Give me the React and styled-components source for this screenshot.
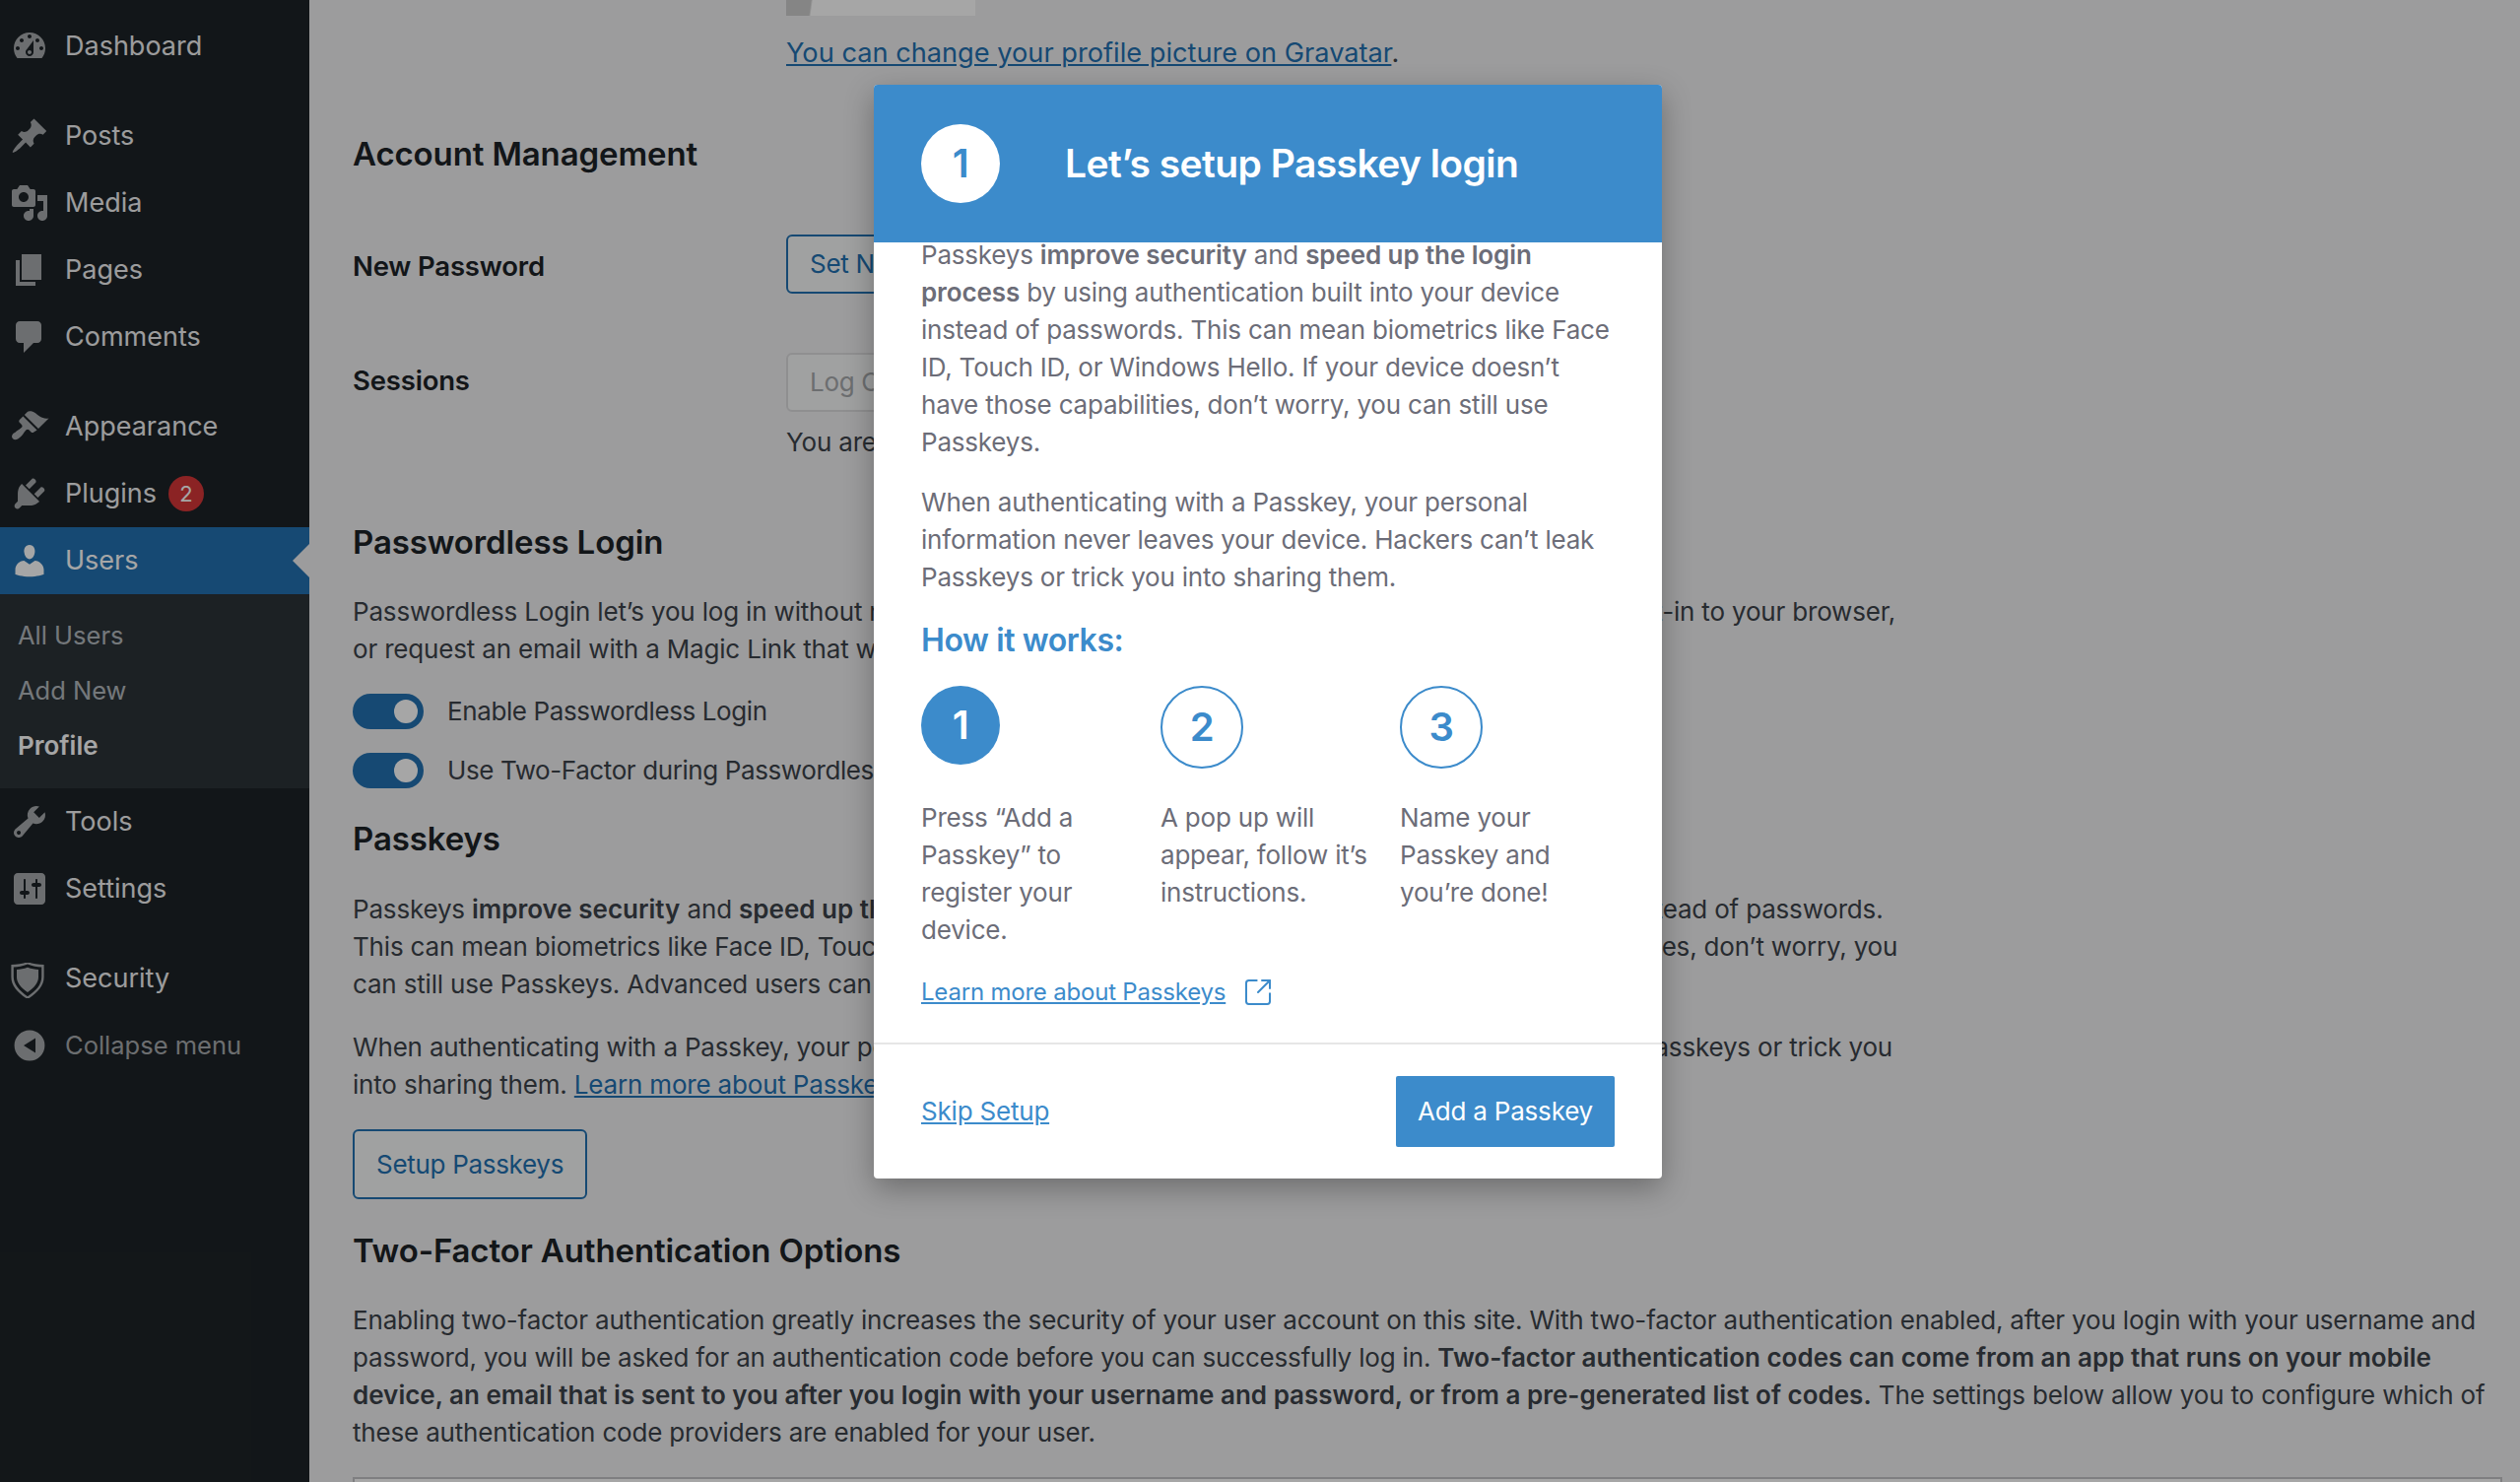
import React from "react";
import styled, { createGlobalStyle } from "styled-components";
import { SquareArrowOutUpRight } from "lucide-react";

const GlobalStyle = createGlobalStyle`
  html, body { margin: 0; padding: 0; background: #f0f0f1; }
  body { font-family: Inter, "Liberation Sans", sans-serif; font-size: 26px; line-height: 38px; color: #3c434a; letter-spacing: -0.18px; }
  * { box-sizing: border-box; }
`;

const Page = styled.div`
  position: relative;
  display: flex;
  width: 2558px;
  height: 1504px;
  overflow: hidden;
`;

const Sidebar = styled.nav`
  width: 314px;
  flex: none;
  background: #1d2327;
  padding-top: 13px;
  letter-spacing: 0;
`;

const MenuRow = styled.div`
  position: relative;
  display: flex;
  align-items: center;
  height: 68px;
  padding-left: 10px;
  margin-top: ${(p) => (p.$sep ? "23px" : "0")};
  background: ${(p) => (p.$active ? "#2271b1" : "transparent")};
  color: ${(p) => (p.$active ? "#fff" : p.$muted ? "#a7aaad" : "#f0f0f1")};
  font-size: ${(p) => (p.$muted ? "25.500px" : "27px")};
  svg { flex: none; width: 40px; height: 40px; margin-right: 16px; fill: ${(p) => (p.$active ? "#fff" : "#a7aaad")}; }
`;

const MenuArrow = styled.span`
  position: absolute;
  right: 0;
  top: 50%;
  margin-top: -17px;
  border: 17px solid transparent;
  border-left-width: 0;
  border-right: 17px solid #f0f0f1;
`;

const Badge = styled.span`
  display: inline-flex;
  align-items: center;
  justify-content: center;
  width: 36px;
  height: 36px;
  margin-left: 12px;
  border-radius: 50%;
  background: #d63638;
  color: #fff;
  font-size: 22px;
`;

const SubMenu = styled.div`
  background: #2c3338;
  padding: 14px 0 15px 18px;
`;

const SubItem = styled.div`
  height: 56px;
  line-height: 56px;
  font-size: ${(p) => (p.$current ? "26px" : "25.500px")};
  color: ${(p) => (p.$current ? "#fff" : "rgba(240, 246, 252, 0.7)")};
  font-weight: ${(p) => (p.$current ? 600 : 400)};
`;

const Main = styled.main`
  flex: 1;
  min-width: 0;
  padding-left: 44px;
`;

const FormRow = styled.div`
  display: flex;
  align-items: ${(p) => p.$align || "flex-start"};
  margin-top: ${(p) => p.$top || "0"};
`;

const RowLabel = styled.div`
  width: 440px;
  flex: none;
  padding-top: ${(p) => p.$pad || "0"};
  font-size: 27.500px;
  font-weight: 600;
  color: #1d2327;
`;

const RowBody = styled.div`
  white-space: nowrap;
`;

const AvatarEdge = styled.div`
  width: 192px;
  height: 16px;
  background: linear-gradient(98deg, #cdcdcd 13%, #fff 14%);
  margin-bottom: 19px;
`;

const TextLink = styled.a`
  color: #2271b1;
  text-decoration: underline;
`;

const GravatarLine = styled.div`
  font-size: 27.200px;
  letter-spacing: 0;
`;

const SectionTitle = styled.h2`
  margin: ${(p) => p.$margin || "0"};
  font-size: 33px;
  line-height: 44px;
  font-weight: 600;
  letter-spacing: -0.12px;
  color: #1d2327;
`;

const OutlineButton = styled.div`
  display: ${(p) => (p.$block ? "flex" : "inline-flex")};
  width: ${(p) => (p.$block ? "fit-content" : "auto")};
  align-items: center;
  height: ${(p) => p.$height || "60px"};
  margin-top: ${(p) => p.$top || "0"};
  padding: 0 22px;
  border: 2px solid ${(p) => (p.$disabled ? "#dcdcde" : "#2271b1")};
  border-radius: 6px;
  color: ${(p) => (p.$disabled ? "#a7aaad" : "#2271b1")};
  background: #f6f7f7;
  letter-spacing: -0.3px;
  white-space: nowrap;
`;

const SessionNote = styled.div`
  margin-top: 12px;
`;

const Para = styled.p`
  margin: ${(p) => p.$margin || "0"};
  white-space: nowrap;
  strong { font-weight: 600; letter-spacing: 0; }
`;

/* the stretch of a line that sits behind the modal: tightened so the visible tail lands right */
const Tight = styled.span`
  letter-spacing: ${(p) => p.$by};
`;

const ToggleRow = styled.div`
  display: flex;
  align-items: center;
  height: 36px;
  margin-top: ${(p) => p.$top};
  white-space: nowrap;
  letter-spacing: -0.4px;
`;

const Toggle = styled.span`
  flex: none;
  display: flex;
  justify-content: flex-end;
  align-items: center;
  width: 72px;
  height: 36px;
  margin-right: 24px;
  padding-right: 6px;
  border-radius: 18px;
  background: #2271b1;
  &::after {
    content: "";
    width: 24px;
    height: 24px;
    border-radius: 50%;
    background: #fff;
  }
`;

const ProvidersBox = styled.div`
  width: 2182px;
  height: 20px;
  margin-top: 26px;
  background: #fff;
  border: 2px solid #c3c4c7;
`;

const Overlay = styled.div`
  position: absolute;
  inset: 0;
  background: rgba(0, 0, 0, 0.35);
`;

const Modal = styled.div`
  position: absolute;
  left: 887px;
  top: 86px;
  width: 800px;
  height: 1110px;
  display: flex;
  flex-direction: column;
  background: #fff;
  border-radius: 4px;
  overflow: hidden;
  box-shadow: 0 10px 30px rgba(0, 0, 0, 0.3);
  color: #6c6d78;
  letter-spacing: -0.2px;
`;

const ModalHeader = styled.header`
  position: relative;
  z-index: 1;
  flex: none;
  display: flex;
  align-items: center;
  height: 160px;
  padding-left: 48px;
  background: #3c8bcb;
  color: #fff;
`;

const HeaderTitle = styled.h1`
  margin: 0 0 0 66px;
  font-size: 39px;
  line-height: 48px;
  font-weight: 600;
  letter-spacing: -0.56px;
`;

const StepCircle = styled.div`
  flex: none;
  display: flex;
  align-items: center;
  justify-content: center;
  width: ${(p) => (p.$variant === "outline" ? "84px" : "80px")};
  height: ${(p) => (p.$variant === "outline" ? "84px" : "80px")};
  border-radius: 50%;
  font-size: 40px;
  font-weight: 600;
  background: ${(p) => (p.$variant === "filled" ? "#3c8bcb" : p.$variant === "white" ? "#fff" : "transparent")};
  color: ${(p) => (p.$variant === "filled" ? "#fff" : "#3c8bcb")};
  border: ${(p) => (p.$variant === "outline" ? "2px solid #3c8bcb" : "none")};
`;

const ModalBody = styled.div`
  flex: 1;
  margin-top: -6px;
  padding: 0 48px;
  p { margin: 0 0 23px; }
  strong { font-weight: 600; letter-spacing: -0.1px; }
`;

const HowTitle = styled.h3`
  margin: 25px 0 26px;
  font-size: 32px;
  line-height: 40px;
  font-weight: 600;
  letter-spacing: -0.4px;
  color: #3c8bcb;
`;

const Steps = styled.div`
  display: grid;
  grid-template-columns: repeat(3, 243px);
`;

const Step = styled.div`
  padding-right: 20px;
`;

const StepText = styled.div`
  margin-top: ${(p) => p.$top};
`;

const LearnMore = styled.div`
  display: flex;
  align-items: center;
  margin-top: 25px;
  font-size: 24px;
  letter-spacing: -0.2px;
  a { color: #3c8bcb; text-decoration: underline; }
  svg { margin-left: 17px; color: #3c8bcb; }
`;

const ModalFooter = styled.footer`
  flex: none;
  display: flex;
  align-items: center;
  justify-content: space-between;
  height: 138px;
  padding: 0 48px 0;
  border-top: 2px solid #e6e6e6;
  a { color: #3c8bcb; text-decoration: underline; }
`;

const PrimaryButton = styled.div`
  display: flex;
  align-items: center;
  justify-content: center;
  width: 222px;
  height: 72px;
  border-radius: 2px;
  background: #3c8bcb;
  color: #fff;
`;

const icons = {
  dashboard: "M3.76 16h12.48c1.1-1.37 1.76-3.11 1.76-5 0-4.42-3.58-8-8-8s-8 3.58-8 8c0 1.89.66 3.63 1.76 5zM10 4c.55 0 1 .45 1 1s-.45 1-1 1-1-.45-1-1 .45-1 1-1zM6 6c.55 0 1 .45 1 1s-.45 1-1 1-1-.45-1-1 .45-1 1-1zm8 0c.55 0 1 .45 1 1s-.45 1-1 1-1-.45-1-1 .45-1 1-1zm-5.37 5.55L12 7v6c0 1.1-.9 2-2 2s-2-.9-2-2c0-.57.24-1.08.63-1.45zM4 10c.55 0 1 .45 1 1s-.45 1-1 1-1-.45-1-1 .45-1 1-1zm12 0c.55 0 1 .45 1 1s-.45 1-1 1-1-.45-1-1 .45-1 1-1zm-5 3c0-.55-.45-1-1-1s-1 .45-1 1 .45 1 1 1 1-.45 1-1z",
  post: "M10.44 3.02l1.82-1.82 6.36 6.35-1.83 1.82c-1.05-.68-2.48-.57-3.41.36l-.75.75c-.92.93-1.04 2.35-.35 3.41l-1.83 1.82-2.41-2.41-2.8 2.79c-.42.42-3.38 2.71-3.8 2.29s1.86-3.39 2.28-3.81l2.79-2.79L4.1 9.36l1.83-1.82c1.05.69 2.48.57 3.4-.36l.75-.75c.93-.92 1.05-2.35.36-3.41z",
  media: "M13 11V4c0-.55-.45-1-1-1h-1.67L9 1H5L3.67 3H2c-.55 0-1 .45-1 1v7c0 .55.45 1 1 1h10c.55 0 1-.45 1-1zM7 4.5c1.38 0 2.5 1.12 2.5 2.5S8.38 9.5 7 9.5 4.5 8.38 4.5 7 5.62 4.5 7 4.5zM14 6h5v10.5c0 1.38-1.12 2.5-2.5 2.5S14 17.88 14 16.5s1.12-2.5 2.5-2.5c.17 0 .34.02.5.05V9h-3V6zm-4 8.05V13h2v3.5c0 1.38-1.12 2.5-2.5 2.5S7 17.88 7 16.5 8.12 14 9.5 14c.17 0 .34.02.5.05z",
  page: "M6 15V2h10v13H6zm-1 1h8v2H3V5h2v11z",
  comments: "M5 2h9c1.1 0 2 .9 2 2v7c0 1.1-.9 2-2 2h-2l-5 5v-5H5c-1.1 0-2-.9-2-2V4c0-1.1.9-2 2-2z",
  appearance: "M14.48 11.06L7.41 3.99l1.5-1.5c.5-.56 2.3-.47 3.51.32 1.21.8 1.43 1.28 2.91 2.1 1.18.64 2.45 1.26 4.45.85zm-.71.71L6.7 4.7 4.93 6.47c-.39.39-.39 1.02 0 1.41l1.06 1.06c.39.39.39 1.03 0 1.42-.6.6-1.43 1.11-2.21 1.69-.35.26-.7.53-1.01.84C1.43 13.23.4 14.98 1.53 16.12c1.14 1.13 2.88.1 4.23-1.25.31-.31.58-.66.85-1.02.57-.78 1.08-1.61 1.69-2.21.39-.39 1.02-.39 1.41 0l1.06 1.06c.39.39 1.02.39 1.41 0z",
  plugins: "M13.11 4.36L9.87 7.6 8 5.73l3.24-3.24c.35-.34 1.05-.2 1.56.32.52.51.66 1.21.31 1.55zm-8 1.77l.91-1.12 9.01 9.01-1.19.84c-.71.71-2.63 1.16-3.82 1.16H6.14L4.9 17.26c-.59.59-1.54.59-2.12 0-.59-.58-.59-1.53 0-2.12l1.24-1.24v-3.88c0-1.13.4-3.19 1.09-3.89zm7.26 3.97l3.24-3.24c.34-.35 1.04-.21 1.55.31.52.51.66 1.21.31 1.55l-3.24 3.25z",
  users: "M10 9.25c-2.27 0-2.73-3.44-2.73-3.44C7 4.02 7.82 2 9.97 2c2.16 0 2.98 2.02 2.71 3.81 0 0-.41 3.44-2.68 3.44zm0 2.57L12.72 10c2.39 0 4.52 2.33 4.52 4.53v2.49s-3.65 1.13-7.24 1.13c-3.65 0-7.24-1.13-7.24-1.13v-2.49c0-2.25 1.94-4.48 4.47-4.48z",
  tools: "M16.68 9.77c-1.34 1.34-3.3 1.67-4.95.99l-5.41 6.52c-.99.99-2.59.99-3.58 0s-.99-2.59 0-3.57l6.52-5.42c-.68-1.65-.35-3.61.99-4.95 1.28-1.28 3.12-1.62 4.72-1.06l-2.89 2.89 2.82 2.82 2.86-2.87c.53 1.58.18 3.39-1.08 4.65zM3.81 16.21c.4.39 1.04.39 1.43 0 .4-.4.4-1.04 0-1.43-.39-.4-1.03-.4-1.43 0-.39.39-.39 1.03 0 1.43z",
  settings: "M18 16V4c0-1.1-.9-2-2-2H4c-1.1 0-2 .9-2 2v12c0 1.1.9 2 2 2h12c1.1 0 2-.9 2-2zM8 11h1c.55 0 1 .45 1 1s-.45 1-1 1H8v1.5c0 .28-.22.5-.5.5s-.5-.22-.5-.5V13H6c-.55 0-1-.45-1-1s.45-1 1-1h1V5.5c0-.28.22-.5.5-.5s.5.22.5.5V11zm5-2h-1c-.55 0-1-.45-1-1s.45-1 1-1h1V5.5c0-.28.22-.5.5-.5s.5.22.5.5V7h1c.55 0 1 .45 1 1s-.45 1-1 1h-1v5.5c0 .28-.22.5-.5.5s-.5-.22-.5-.5V9z",
  security: "M8.5 0.5C5.8 1.6 3.2 2 0.2 2v6.3c0 4.6 3.4 8.1 8.3 11.2 4.9-3.1 8.3-6.6 8.3-11.2V2c-3 0-5.600-.4-8.300-1.500zm0 1.3c2.500 1 4.900 1.400 7.100 1.400v5.100c0 3.900-2.800 7-7.100 9.800C4.200 15 1.400 12 1.400 8.100V3.200c2.200 0 4.600-.4 7.100-1.400zM8.500 3.400C6.600 4.100 4.800 4.400 3 4.500v3.700c0 3 2.200 5.500 5.500 7.800 3.300-2.300 5.500-4.800 5.500-7.800V4.500c-1.800-.1-3.600-.4-5.500-1.100z",
  collapse: "M10 2.300a7.700 7.700 0 1 0 0 15.400 7.700 7.700 0 0 0 0-15.400zM13 6.200v7.600L7 10z",
};

const DashIcon = ({ name, box = "0 0 20 20" }) => (
  <svg viewBox={box} aria-hidden="true">
    <path fillRule="evenodd" d={icons[name]} />
  </svg>
);

const Menu = () => (
  <Sidebar>
    <MenuRow><DashIcon name="dashboard" />Dashboard</MenuRow>
    <MenuRow $sep><DashIcon name="post" />Posts</MenuRow>
    <MenuRow><DashIcon name="media" />Media</MenuRow>
    <MenuRow><DashIcon name="page" />Pages</MenuRow>
    <MenuRow><DashIcon name="comments" />Comments</MenuRow>
    <MenuRow $sep><DashIcon name="appearance" />Appearance</MenuRow>
    <MenuRow><DashIcon name="plugins" />Plugins<Badge>2</Badge></MenuRow>
    <MenuRow $active><DashIcon name="users" />Users<MenuArrow /></MenuRow>
    <SubMenu>
      <SubItem>All Users</SubItem>
      <SubItem>Add New</SubItem>
      <SubItem $current>Profile</SubItem>
    </SubMenu>
    <MenuRow><DashIcon name="tools" />Tools</MenuRow>
    <MenuRow><DashIcon name="settings" />Settings</MenuRow>
    <MenuRow $sep><DashIcon name="security" box="-0.500 -1 20 20" />Security</MenuRow>
    <MenuRow $muted><DashIcon name="collapse" />Collapse menu</MenuRow>
  </Sidebar>
);

const Content = () => (
  <Main>
    <FormRow>
      <RowLabel />
      <RowBody>
        <AvatarEdge />
        <GravatarLine><TextLink>You can change your profile picture on Gravatar</TextLink>.</GravatarLine>
      </RowBody>
    </FormRow>
    <SectionTitle $margin="61px 0 0">Account Management</SectionTitle>
    <FormRow $top="60px" $align="center">
      <RowLabel $pad="3px">New Password</RowLabel>
      <OutlineButton>Set New Password</OutlineButton>
    </FormRow>
    <FormRow $top="60px">
      <RowLabel $pad="9px">Sessions</RowLabel>
      <RowBody>
        <OutlineButton $disabled>Log Out Everywhere Else</OutlineButton>
        <SessionNote>You are only logged in at this location.</SessionNote>
      </RowBody>
    </FormRow>
    <SectionTitle $margin="60px 0 0">Passwordless Login</SectionTitle>
    <Para $margin="30px 0 0">
      Passwordless Login let’s you log in without requiring a password. Use Passkeys, the secure login method built-in to your browser,<br />
      or request an email with a Magic Link that will log you in with a click.
    </Para>
    <ToggleRow $top="26px"><Toggle />Enable Passwordless Login</ToggleRow>
    <ToggleRow $top="24px"><Toggle />Use Two-Factor during Passwordless Login</ToggleRow>
    <SectionTitle $margin="29px 0 0">Passkeys</SectionTitle>
    <Para $margin="31px 0 0">
      Passkeys <strong>improve security</strong> and <strong>speed up the login process</strong> by using authentication built into your device instead of passwords.<br />
      This can mean biometrics like Face ID, <Tight $by="-0.3px">Touch ID, or Windows Hello. If your device doesn’t have those capabiliti</Tight>es, don’t worry, you<br />
      can still use Passkeys. Advanced users can also use hardware security keys.
    </Para>
    <Para $margin="26px 0 0">
      When authenticating with a Passkey, your <Tight $by="-0.34px">personal information never leaves your device. Hackers can’t leak</Tight> Passkeys or trick you<br />
      into sharing them. <TextLink>Learn more about Passkeys</TextLink>.
    </Para>
    <OutlineButton $block $height="71px" $top="26px">Setup Passkeys</OutlineButton>
    <SectionTitle $margin="30px 0 0">Two-Factor Authentication Options</SectionTitle>
    <Para $margin="30px 0 0">
      Enabling two-factor authentication greatly increases the security of your user account on this site. With two-factor authentication enabled, after you login with your username and<br />
      password, you will be asked for an authentication code before you can successfully log in. <strong>Two-factor authentication codes can come from an app that runs on your mobile</strong><br />
      <strong>device, an email that is sent to you after you login with your username and password, or from a pre-generated list of codes.</strong> The settings below allow you to configure which of<br />
      these authentication code providers are enabled for your user.
    </Para>
    <ProvidersBox />
  </Main>
);

const SetupModal = () => (
  <Overlay>
    <Modal>
      <ModalHeader>
        <StepCircle $variant="white">1</StepCircle>
        <HeaderTitle>Let’s setup Passkey login</HeaderTitle>
      </ModalHeader>
      <ModalBody>
        <p>
          Passkeys <strong>improve security</strong> and <strong>speed up the login process</strong> by using authentication built into your device instead of passwords. This can mean biometrics like Face ID, Touch ID, or Windows Hello. If your device doesn’t have those capabilities, don’t worry, you can still use Passkeys.
        </p>
        <p>
          When authenticating with a Passkey, your personal information never leaves your device. Hackers can’t leak Passkeys or trick you into sharing them.
        </p>
        <HowTitle>How it works:</HowTitle>
        <Steps>
          <Step>
            <StepCircle $variant="filled">1</StepCircle>
            <StepText $top="35px">Press “Add a Passkey” to register your device.</StepText>
          </Step>
          <Step>
            <StepCircle $variant="outline">2</StepCircle>
            <StepText $top="31px">A pop up will appear, follow it’s instructions.</StepText>
          </Step>
          <Step>
            <StepCircle $variant="outline">3</StepCircle>
            <StepText $top="31px">Name your Passkey and you’re done!</StepText>
          </Step>
        </Steps>
        <LearnMore>
          <a>Learn more about Passkeys</a>
          <SquareArrowOutUpRight size={32} strokeWidth={1.5} />
        </LearnMore>
      </ModalBody>
      <ModalFooter>
        <a>Skip Setup</a>
        <PrimaryButton>Add a Passkey</PrimaryButton>
      </ModalFooter>
    </Modal>
  </Overlay>
);

export default function App() {
  return (
    <Page>
      <GlobalStyle />
      <Menu />
      <Content />
      <SetupModal />
    </Page>
  );
}
